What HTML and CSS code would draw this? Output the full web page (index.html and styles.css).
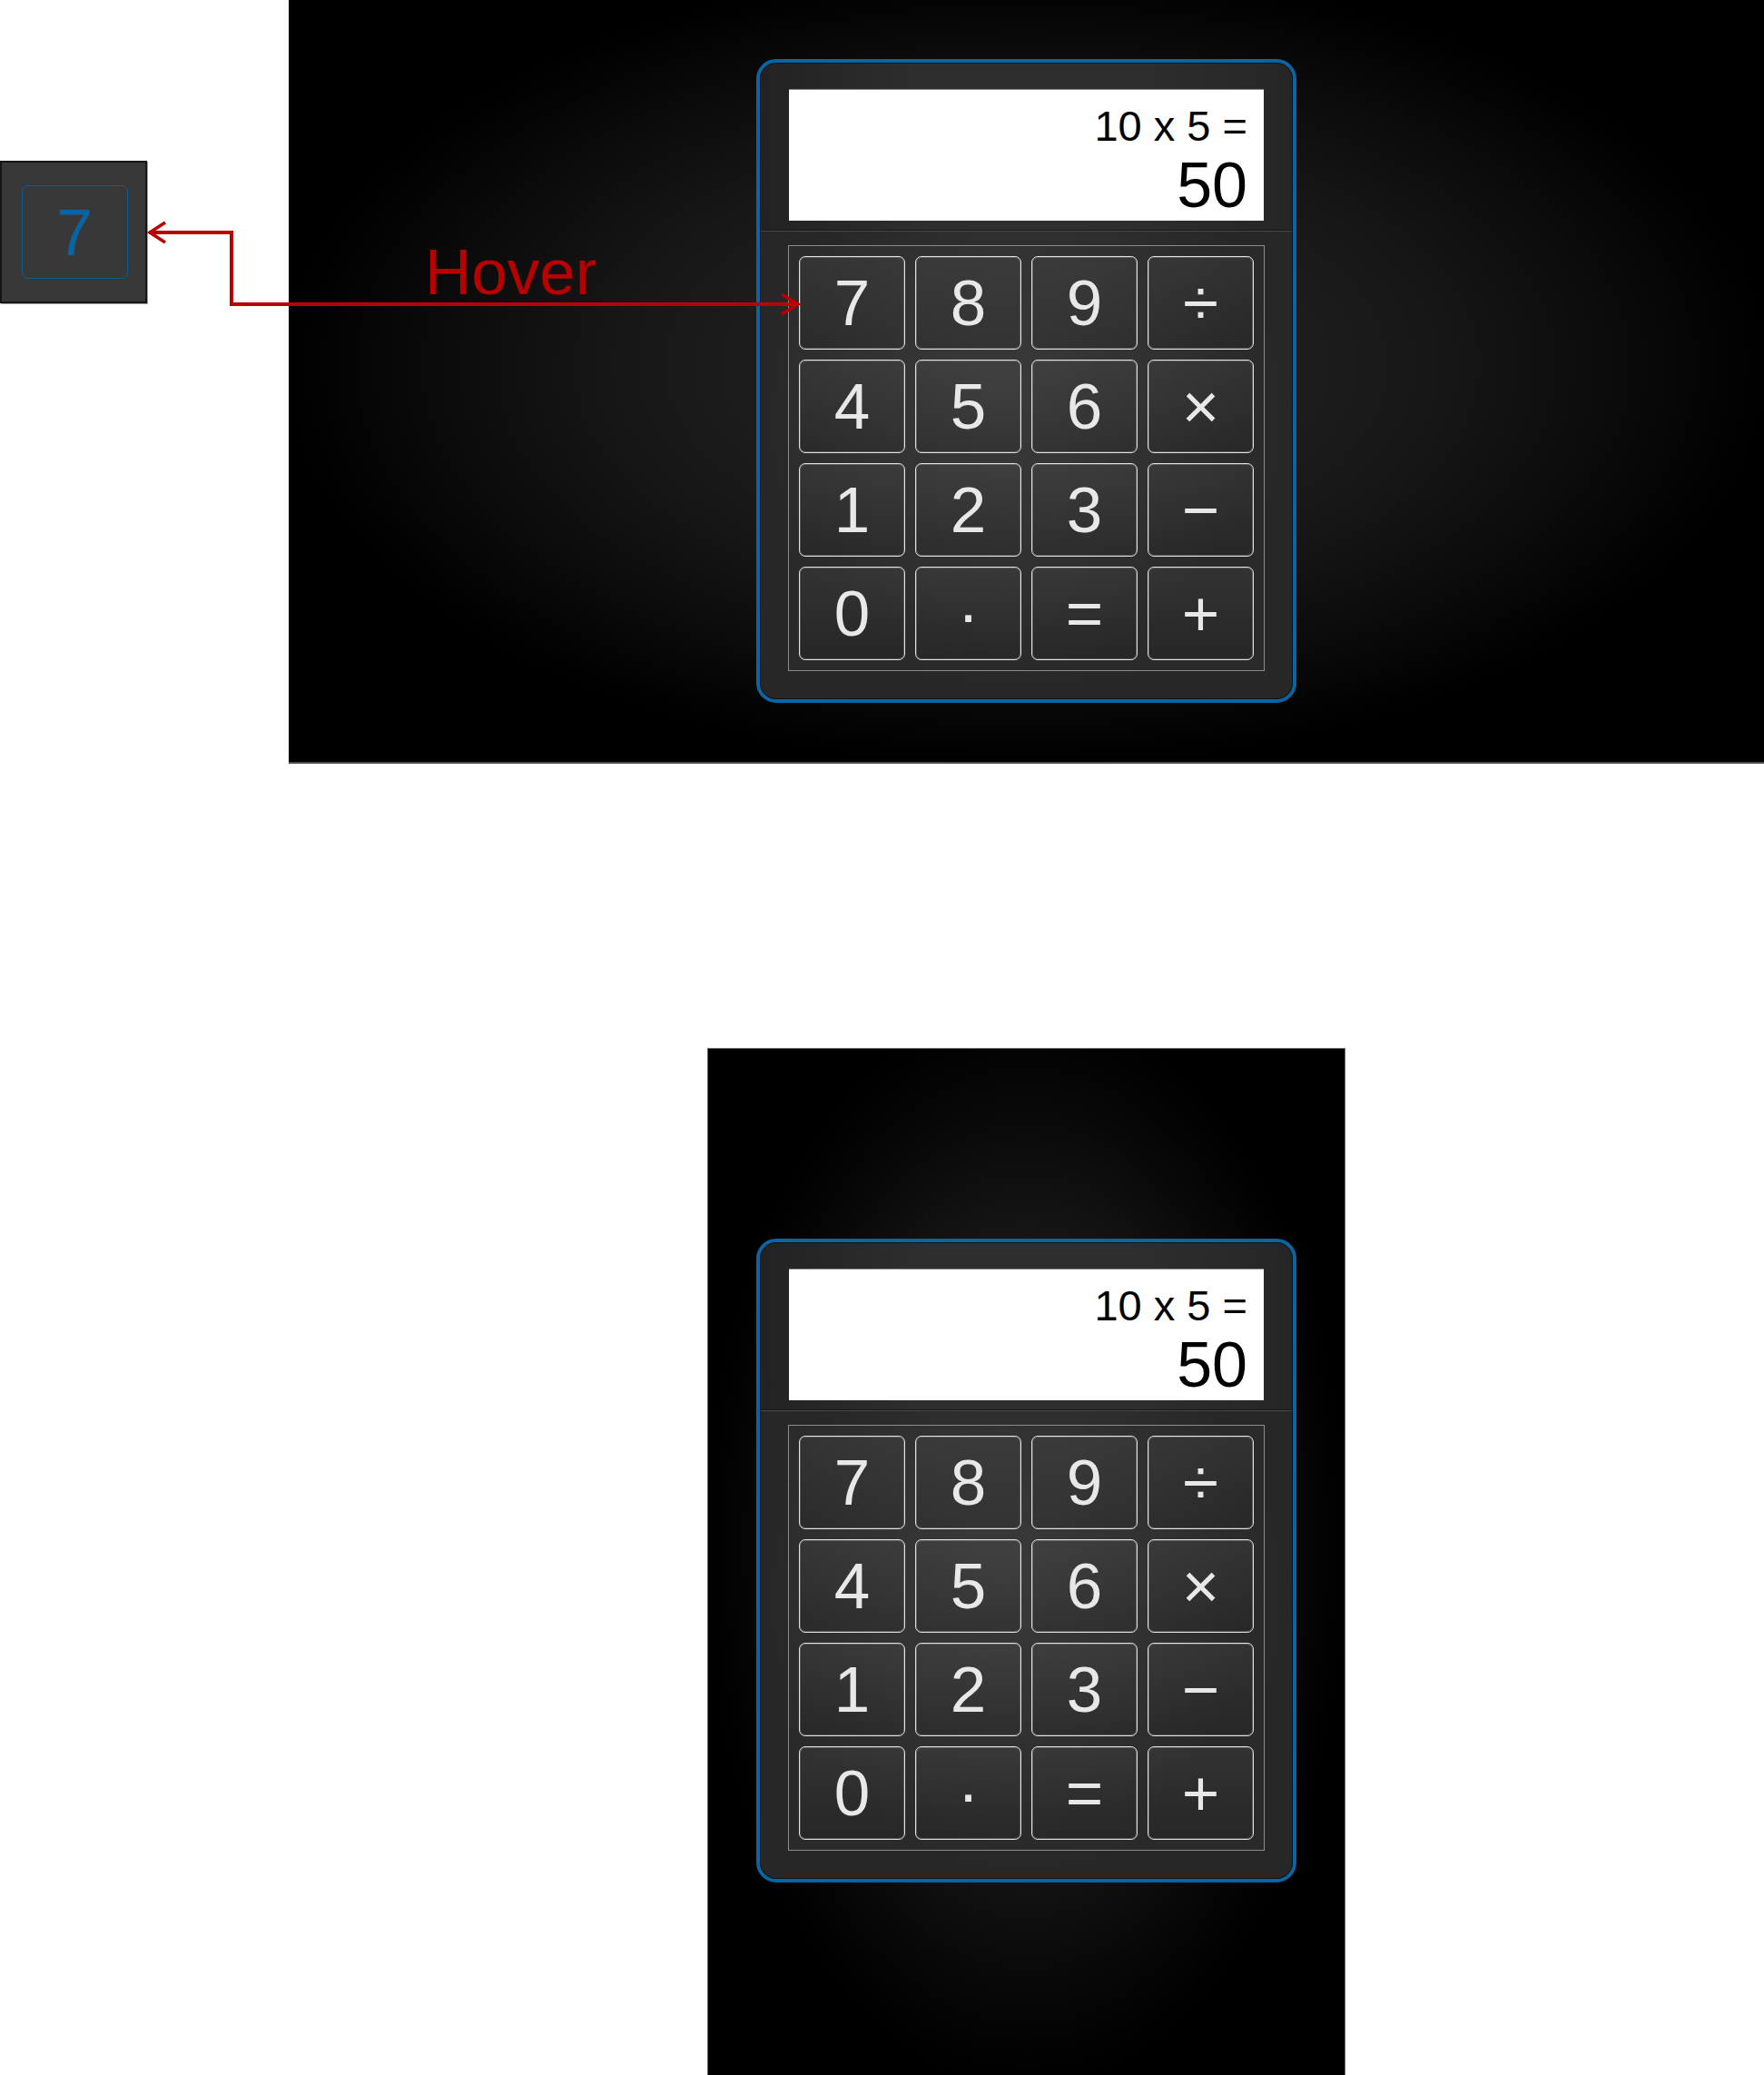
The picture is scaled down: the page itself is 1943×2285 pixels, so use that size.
FILE: index.html
```html
<!DOCTYPE html>
<html lang="en">
<head>
<meta charset="utf-8">
<title>Calculator</title>
<link rel="stylesheet" href="styles.css">
</head>
<body>
<div class="page">
  <div class="top-row">
    <div class="thumb">
      <div class="thumb-key">7</div>
    </div>
    <section class="stage stage-wide">
      <div class="calc">
        <div class="calc-body">
          <div class="calc-head">
            <div class="display">
              <div class="expr">10 x 5 =</div>
              <div class="result">50</div>
            </div>
          </div>
          <div class="calc-keys">
            <div class="keypad">
              <div class="key">7</div><div class="key">8</div><div class="key">9</div><div class="key">÷</div>
              <div class="key">4</div><div class="key">5</div><div class="key">6</div><div class="key">×</div>
              <div class="key">1</div><div class="key">2</div><div class="key">3</div><div class="key">−</div>
              <div class="key">0</div><div class="key">·</div><div class="key">=</div><div class="key">+</div>
            </div>
          </div>
        </div>
      </div>
    </section>
  </div>

  <section class="stage stage-narrow">
    <div class="calc">
      <div class="calc-body">
        <div class="calc-head">
          <div class="display">
            <div class="expr">10 x 5 =</div>
            <div class="result">50</div>
          </div>
        </div>
        <div class="calc-keys">
          <div class="keypad">
            <div class="key">7</div><div class="key">8</div><div class="key">9</div><div class="key">÷</div>
            <div class="key">4</div><div class="key">5</div><div class="key">6</div><div class="key">×</div>
            <div class="key">1</div><div class="key">2</div><div class="key">3</div><div class="key">−</div>
            <div class="key">0</div><div class="key">·</div><div class="key">=</div><div class="key">+</div>
          </div>
        </div>
      </div>
    </div>
  </section>

  <div class="hover-label">Hover</div>
  <svg class="annot" width="1943" height="900" viewBox="0 0 1943 900" aria-hidden="true">
    <path d="M164 256 H255 V335 H878" fill="none" stroke="#b80000" stroke-width="4"/>
    <path d="M182 245 L165 256 L182 267" fill="none" stroke="#b80000" stroke-width="3.5"/>
    <path d="M861 324 L879 335 L861 346" fill="none" stroke="#b80000" stroke-width="3.5"/>
  </svg>
</div>
</body>
</html>
```
FILE: styles.css
```css
* { box-sizing: border-box; }

html, body {
  margin: 0;
  padding: 0;
  background: #ffffff;
  font-family: "Liberation Sans", Arial, sans-serif;
}

.page {
  position: relative;
  width: 1943px;
  height: 2285px;
  overflow: hidden;
}

.top-row {
  display: flex;
  align-items: flex-start;
}

/* hover state thumbnail */
.thumb {
  margin-top: 177px;
  width: 162px;
  height: 157px;
  background: #383838;
  border: 2px solid #151515;
  box-shadow: 1px 1px 0 #9a9a9a;
  display: flex;
  align-items: center;
  justify-content: center;
  padding-left: 2px;
}

.thumb-key {
  width: 117px;
  height: 103px;
  border: 1px solid #0b5f98;
  border-radius: 7px;
  color: #0a64a3;
  font-size: 72px;
  line-height: 1;
  display: flex;
  align-items: center;
  justify-content: center;
}

/* dark stages */
.stage {
  display: flex;
  justify-content: center;
  align-items: flex-start;
}

.stage-wide {
  margin-left: 156px;
  width: 1625px;
  height: 841px;
  padding-top: 65px;
  border-bottom: 2px solid #4a4a4a;
  background: radial-gradient(ellipse farthest-side at 50% 48%, #262626 0%, #1f1f1f 30%, #171717 55%, #0b0b0b 80%, #000000 100%);
}

.stage-narrow {
  margin: 313px 0 0 779px;
  width: 703px;
  height: 1140px;
  padding-top: 209px;
  border: 1px solid #6a6a6a;
  border-bottom: none;
  background: radial-gradient(ellipse farthest-side at 50% 48%, #242424 0%, #1d1d1d 35%, #141414 60%, #080808 82%, #000000 100%);
}

/* calculator */
.calc {
  width: 595px;
  border: 4px solid #0a65a3;
  border-radius: 22px;
  background: #111;
}

.calc-body {
  border: 1px solid #121212;
  border-radius: 18px;
  overflow: hidden;
  background: radial-gradient(ellipse farthest-side at 50% 50%, #353535 0%, #2c2c2c 55%, #222222 100%);
}

.calc-head {
  padding: 28px 31px 10px;
  border-bottom: 1px solid #161616;
  background: linear-gradient(90deg, #222222, #2e2e2e 30%, #2e2e2e 70%, #262626);
}

.display {
  height: 145px;
  background: #ffffff;
  border-top: 1px solid #8a8a8a;
  padding: 16px 18px 0 0;
  text-align: right;
  color: #000;
}

.expr {
  font-size: 47px;
  line-height: 47px;
}

.result {
  margin-top: 7px;
  font-size: 70px;
  line-height: 70px;
}

.calc-keys {
  border-top: 1px solid #4a4a4a;
  padding: 15px 30px 30px;
  background: radial-gradient(ellipse farthest-side at 50% 40%, #373737 0%, #303030 60%, #272727 100%);
}

.keypad {
  border: 1px solid #8c8c8c;
  padding: 11px;
  display: grid;
  grid-template-columns: repeat(4, 117px);
  grid-template-rows: repeat(4, 103px);
  column-gap: 11px;
  row-gap: 11px;
  background: radial-gradient(ellipse farthest-side at 45% 35%, #3a3a3a 0%, #323232 55%, #2a2a2a 100%);
}

.key {
  border: 1px solid #e2e2e2;
  border-radius: 7px;
  box-shadow: inset 0 0 0 1px rgba(190, 190, 190, 0.3);
  color: #e8e8e8;
  font-size: 71px;
  line-height: 1;
  display: flex;
  align-items: center;
  justify-content: center;
  background: linear-gradient(rgba(255,255,255,0.04), rgba(0,0,0,0.08));
}

/* annotations */
.hover-label {
  position: absolute;
  left: 468px;
  top: 264px;
  font-size: 71px;
  line-height: 71px;
  color: #b80000;
}

.annot {
  position: absolute;
  left: 0;
  top: 0;
  pointer-events: none;
}
```
